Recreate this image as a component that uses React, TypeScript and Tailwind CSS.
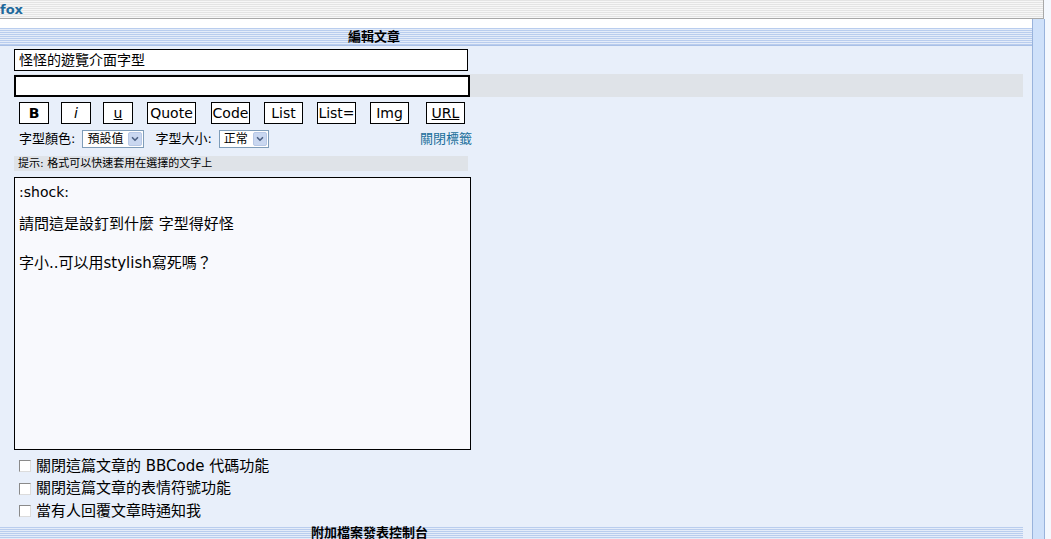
import { ChevronDown } from "lucide-react";

const tags = [
  { label: "B", cls: "w-[30px] font-bold", ml: "ml-0" },
  { label: "i", cls: "w-[30px] italic", ml: "ml-[12px]" },
  { label: "u", cls: "w-[30px] underline", ml: "ml-[12px]" },
  { label: "Quote", cls: "w-[49px]", ml: "ml-[14px]" },
  { label: "Code", cls: "w-[39px]", ml: "ml-[15px]" },
  { label: "List", cls: "w-[39px]", ml: "ml-[14px]" },
  { label: "List=", cls: "w-[39px]", ml: "ml-[14px]" },
  { label: "Img", cls: "w-[39px]", ml: "ml-[14px]" },
  { label: "URL", cls: "w-[39px] underline", ml: "ml-[17px]" },
];

const options = [
  "關閉這篇文章的 BBCode 代碼功能",
  "關閉這篇文章的表情符號功能",
  "當有人回覆文章時通知我",
];

function Select({ value, width }: { value: string; width: string }) {
  return (
    <div className={`flex h-[18px] items-stretch border border-[#7f9db9] bg-white ${width}`}>
      <span className="flex-1 pl-[4px] text-[12px] leading-[16px]">{value}</span>
      <span className="m-[1px] flex w-[14px] items-center justify-center rounded-[2px] border border-[#b7c8e6] bg-[#c9d7f0]">
        <ChevronDown className="h-[10px] w-[10px] text-[#4d6185]" strokeWidth={4} />
      </span>
    </div>
  );
}

function SectionBar({ title, top = false }: { title: string; top?: boolean }) {
  return (
    <div
      className={`flex h-[18px] justify-center border-b border-[#a9c0e6] bg-[repeating-linear-gradient(180deg,#b9cdee_0px,#b9cdee_1px,#e4ecf9_1px,#e4ecf9_2px)] ${
        top ? "items-start" : "items-center"
      }`}
    >
      <span className="-ml-[284px] text-[13px] font-bold leading-[12px] text-black">{title}</span>
    </div>
  );
}

export default function App() {
  return (
    <div className="h-[539px] w-[1051px] overflow-hidden bg-[#f4f8fe] font-['DejaVu_Sans','Noto_Sans_CJK_TC',sans-serif] text-black">
      {/* top bar */}
      <div className="flex h-[19px] w-[1044px] items-center border-r border-b border-[#a8a8a8] bg-[repeating-linear-gradient(180deg,#e4e4e4_0px,#e4e4e4_1px,#f7f7f7_1px,#f7f7f7_2px)]">
        <span className="text-[13px] font-bold leading-none text-[#1f6a9c]">fox</span>
      </div>

      <div className="flex">
        <div className="w-[1032px]">
          <div className="h-[9px] bg-white" />
          <SectionBar title="編輯文章" />

          <div className="h-[500px] bg-[#e8effa] pt-[3px]">
            {/* subject */}
            <div className="ml-[14px] flex h-[22px] w-[454px] items-center border border-black bg-white pl-[4px] text-[14px] leading-none">
              怪怪的遊覽介面字型
            </div>

            <div className="mt-[3px] mr-[9px] ml-[14px] flex h-[23px] items-center bg-[#dfe3e8]">
              <div className="h-[22px] w-[456px] border-2 border-black bg-white" />
            </div>

            {/* bbcode buttons */}
            <div className="mt-[5px] ml-[19px] flex">
              {tags.map((t) => (
                <div
                  key={t.label}
                  className={`flex h-[22px] items-center justify-center border border-black bg-white text-[14px] leading-none ${t.cls} ${t.ml}`}
                >
                  {t.label}
                </div>
              ))}
            </div>

            <div className="mt-[6px] flex h-[18px] w-[472px] items-center text-[13px]">
              <span className="ml-[19px] mr-[7px]">字型顏色:</span>
              <Select value="預設值" width="w-[62px]" />
              <span className="ml-[11px] mr-[7px]">字型大小:</span>
              <Select value="正常" width="w-[50px]" />
              <span className="ml-auto text-[13px] text-[#1a6f9c]">關閉標籤</span>
            </div>

            <div className="mt-[8px] ml-[14px] flex h-[15px] w-[454px] items-center bg-[#dfe3e8] pl-[4px] text-[11px] leading-none">
              提示: 格式可以快速套用在選擇的文字上
            </div>

            {/* message body */}
            <div className="mt-[6px] ml-[14px] h-[273px] w-[457px] border border-black bg-[#f8f9fd] px-[4px] pt-[4px] text-[14px] leading-[20px]">
              <p>:shock:</p>
              <p className="mt-[12px] text-[15px]">請問這是設釘到什麼 字型得好怪</p>
              <p className="mt-[19px] text-[15px]">字小..可以用stylish寫死嗎？</p>
            </div>

            <div className="mt-[5px] flex flex-col">
              {options.map((o) => (
                <label key={o} className="flex h-[22.5px] items-center pl-[19px] text-[15px] leading-none">
                  <span className="mr-[5px] h-[12px] w-[12px] border border-[#8a8a8a] border-r-[#dcdcdc] border-b-[#dcdcdc] bg-white" />
                  {o}
                </label>
              ))}
            </div>

            <div className="mt-[4px] mr-[9px]">
              <SectionBar title="附加檔案發表控制台" top />
            </div>
          </div>
        </div>

        <div className="h-[520px] w-[13px] border-x border-[#99b3dc] bg-[#cfe1fa]" />
      </div>
    </div>
  );
}
